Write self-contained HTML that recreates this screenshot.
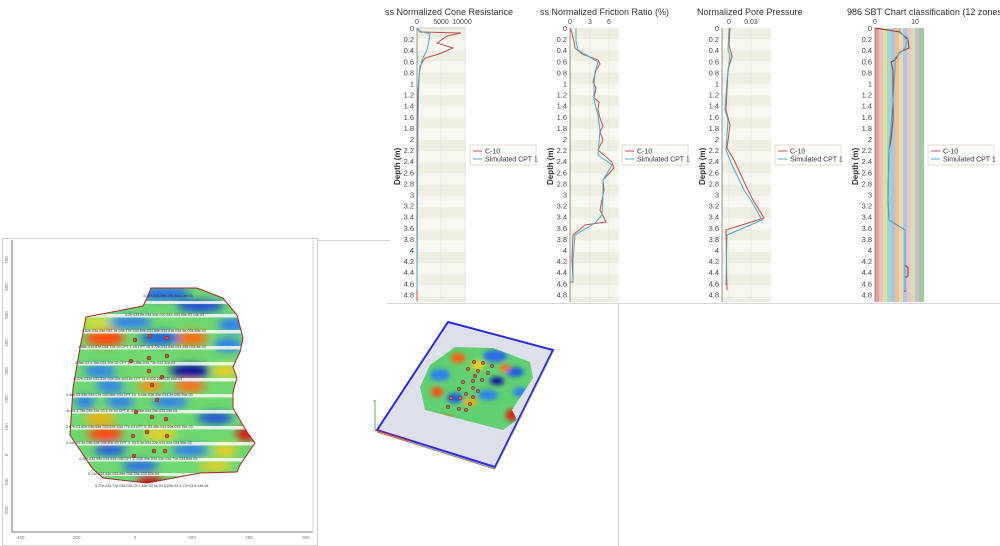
<!DOCTYPE html>
<html><head><meta charset="utf-8"><style>
html,body{margin:0;padding:0;background:#fff;width:1000px;height:546px;overflow:hidden}
svg{display:block;font-family:"Liberation Sans",sans-serif}
</style></head><body>
<svg width="1000" height="546" viewBox="0 0 1000 546" xmlns="http://www.w3.org/2000/svg">
<defs>
<filter id="bl" filterUnits="userSpaceOnUse" x="0" y="250" width="320" height="260"><feGaussianBlur stdDeviation="4"/></filter>
<filter id="bl2" filterUnits="userSpaceOnUse" x="380" y="320" width="200" height="140"><feGaussianBlur stdDeviation="2.5"/></filter>
<clipPath id="mapc"><polygon points="151,288 197,288 223,298 237,315 243,338 240,352 233,367 237,378 233,392 233,408 247,432 255,443 240,465 237,472 200,473 147,483 103,478 92,468 70,435 73,388 80,348 86,317 143,306 147,298"/></clipPath>
<clipPath id="c3d"><polygon points="455,347 493,348 530,362 533,378 512,410 517,420 503,430 425,410 420,387 430,365"/></clipPath>
<pattern id="stripes" x="0" y="28" width="49" height="22.4" patternUnits="userSpaceOnUse"><rect width="49" height="11.2" fill="#efeee2"/><rect y="11.2" width="49" height="11.2" fill="#f8f8f1"/></pattern>
</defs>

<line x1="318" y1="240.5" x2="390" y2="240.5" stroke="#d0d0d0"/>
<line x1="387" y1="303.5" x2="1000" y2="303.5" stroke="#d8d8d8"/>
<line x1="618.5" y1="304" x2="618.5" y2="546" stroke="#d8d8d8"/>

<rect x="2.5" y="238.5" width="315" height="307" fill="#fff" stroke="#d0d0d0"/>
<line x1="12" y1="240" x2="12" y2="532" stroke="#555" stroke-width="0.8"/>
<line x1="12" y1="532" x2="313" y2="532" stroke="#555" stroke-width="0.8"/>
<line x1="313" y1="240" x2="313" y2="532" stroke="#ccc" stroke-width="0.8"/>
<g font-size="4.5" fill="#777" text-anchor="middle">
<text x="20" y="539">-400</text><text x="76" y="539">-200</text><text x="135" y="539">0</text><text x="192" y="539">200</text><text x="249" y="539">400</text><text x="306" y="539">600</text>
<text x="8" y="260" transform="rotate(-90 8 260)">700</text><text x="8" y="287" transform="rotate(-90 8 287)">600</text><text x="8" y="315" transform="rotate(-90 8 315)">500</text><text x="8" y="343" transform="rotate(-90 8 343)">400</text><text x="8" y="371" transform="rotate(-90 8 371)">300</text><text x="8" y="399" transform="rotate(-90 8 399)">200</text><text x="8" y="427" transform="rotate(-90 8 427)">100</text><text x="8" y="455" transform="rotate(-90 8 455)">0</text><text x="8" y="483" transform="rotate(-90 8 483)">-100</text><text x="8" y="511" transform="rotate(-90 8 511)">-200</text>
</g>
<g clip-path="url(#mapc)">
<rect x="60" y="280" width="200" height="210" fill="#6fd870"/>
<g filter="url(#bl)">
<ellipse cx="100" cy="322" rx="22" ry="7" fill="#c8e040"/>
<ellipse cx="105" cy="338" rx="20" ry="8" fill="#ff4a10"/>
<ellipse cx="190" cy="338" rx="18" ry="7" fill="#ff6a10"/>
<ellipse cx="160" cy="338" rx="20" ry="7" fill="#2060e0"/>
<ellipse cx="130" cy="322" rx="22" ry="6" fill="#2f80f0"/>
<ellipse cx="200" cy="306" rx="24" ry="6" fill="#1a4ad8"/>
<ellipse cx="165" cy="294" rx="26" ry="7" fill="#2a70e8"/>
<ellipse cx="232" cy="325" rx="14" ry="7" fill="#2f80f0"/>
<ellipse cx="228" cy="345" rx="14" ry="7" fill="#2f80f0"/>
<ellipse cx="190" cy="371" rx="20" ry="7" fill="#1010a0"/>
<ellipse cx="100" cy="371" rx="16" ry="6" fill="#2f80f0"/>
<ellipse cx="225" cy="371" rx="14" ry="6" fill="#f0d020"/>
<ellipse cx="190" cy="386" rx="16" ry="6" fill="#ff7010"/>
<ellipse cx="110" cy="386" rx="14" ry="6" fill="#2f80f0"/>
<ellipse cx="150" cy="386" rx="12" ry="6" fill="#ff9010"/>
<ellipse cx="170" cy="402" rx="18" ry="6" fill="#2f80f0"/>
<ellipse cx="120" cy="402" rx="14" ry="6" fill="#2f80f0"/>
<ellipse cx="100" cy="418" rx="16" ry="6" fill="#f0b010"/>
<ellipse cx="215" cy="418" rx="18" ry="6" fill="#1a50d8"/>
<ellipse cx="105" cy="434" rx="18" ry="7" fill="#ff4a10"/>
<ellipse cx="160" cy="434" rx="16" ry="6" fill="#f0d020"/>
<ellipse cx="246" cy="434" rx="10" ry="7" fill="#e01010"/>
<ellipse cx="110" cy="450" rx="16" ry="6" fill="#2060e0"/>
<ellipse cx="190" cy="450" rx="18" ry="6" fill="#2f80f0"/>
<ellipse cx="140" cy="466" rx="18" ry="6" fill="#2a70e8"/>
<ellipse cx="150" cy="482" rx="14" ry="6" fill="#d01010"/>
<ellipse cx="85" cy="402" rx="10" ry="7" fill="#2f80f0"/>
<ellipse cx="225" cy="450" rx="12" ry="6" fill="#f0d020"/>
<ellipse cx="215" cy="466" rx="16" ry="5" fill="#f0d020"/>
</g>
<g fill="#fff" opacity="0.8">
<rect x="60" y="301" width="200" height="3"/><rect x="60" y="314" width="200" height="3.5"/><rect x="60" y="330" width="200" height="3.5"/><rect x="60" y="346" width="200" height="3.5"/><rect x="60" y="362" width="200" height="3.5"/><rect x="60" y="378" width="200" height="3.5"/><rect x="60" y="394" width="200" height="3.5"/><rect x="60" y="410" width="200" height="3.5"/><rect x="60" y="426" width="200" height="3.5"/><rect x="60" y="442" width="200" height="3.5"/><rect x="60" y="458" width="200" height="3.5"/><rect x="60" y="473" width="200" height="3"/>
</g>
</g>
<polygon points="151,288 197,288 223,298 237,315 243,338 240,352 233,367 237,378 233,392 233,408 247,432 255,443 240,465 237,472 200,473 147,483 103,478 92,468 70,435 73,388 80,348 86,317 143,306 147,298" fill="none" stroke="#9a2a2a" stroke-width="1"/>
<g font-size="3.6" fill="#333">
<text x="143" y="297">3.12e-034.36e-034.16e2.6e-03</text>
<text x="125" y="316">3.2e-033.2e-034.50e-032.81e-034.90e-03.14e-03</text>
<text x="82" y="332">3.62e-034.24e-032.7e-034.17e-033.84e-034.84e-034.81e-034.4e-034.89e-03</text>
<text x="78" y="348">4.68e-033.87e-034.72e-03 CPT 1-05 CPT 16 3.72e-034.84e-034.45e-034.8e-03</text>
<text x="75" y="364">4.58e-03.4.16e-034.20e-03 CPT 13 3.88e-034.73e-033.32e-03</text>
<text x="74" y="380">5.27e-033e-033.81e-034.42e-034.80 CPT 11 e-032.26e-035.86e-03</text>
<text x="66" y="396">4.46e-03.53e-033.07e-034.66e-034 CPT 10 .5.08e-036.40e-034.2e-035.29e-03</text>
<text x="66" y="412">4e-03.3.75e-035.33e-03.5.7e-03 CPT 8 .033.88e-034.25e-033.15e-03</text>
<text x="66" y="428">3.67e-03.82e-036.64e-033.87e-034.77e-03 CPT 5 .03.48e-033.00e-033.76e-03</text>
<text x="66" y="444">4.34e-03.3e-036.52e-035.40e-03 CPT 3 .03.5.3e-034.22e-033.52e-034.55e-03</text>
<text x="79" y="460">4.30e-032.99e-034.81e-035 CPT 2 .034.30e-034.33e-034.71e-034.84e-03</text>
<text x="88" y="475">5.12e-033.54e-033.85e-034.33e-033.52e-03</text>
<text x="95" y="487">5.72e-034.77e-035.02e-03 7.46e-03  5e-03  6.53e-03 4.17e-03.5.14e-04</text>
</g>
<g fill="#c0503a" stroke="#7a2a1a" stroke-width="0.5">
<circle cx="150" cy="336" r="2"/><circle cx="167" cy="338" r="2"/><circle cx="135" cy="340" r="2"/><circle cx="167" cy="356" r="2"/><circle cx="131" cy="361" r="2"/><circle cx="149" cy="358" r="2"/><circle cx="149" cy="371" r="2"/><circle cx="162" cy="377" r="2"/><circle cx="152" cy="385" r="2"/><circle cx="157" cy="400" r="2"/><circle cx="136" cy="412" r="2"/><circle cx="152" cy="417" r="2"/><circle cx="166" cy="419" r="2"/><circle cx="147" cy="432" r="2"/><circle cx="167" cy="436" r="2"/><circle cx="133" cy="436" r="2"/><circle cx="154" cy="451" r="2"/><circle cx="165" cy="451" r="2"/><circle cx="134" cy="456" r="2"/>
</g>

<!-- 3D VIEW -->
<polygon points="448,322 553,350 495,467 377,430" fill="#dde0ea" stroke="#2a2ae0" stroke-width="2"/>
<line x1="377" y1="432" x2="495" y2="469" stroke="#9a8a7a" stroke-width="1.2"/>
<line x1="553" y1="352" x2="495" y2="469" stroke="#9a8a7a" stroke-width="0.8"/>
<g clip-path="url(#c3d)">
<rect x="415" y="340" width="125" height="95" fill="#60d070"/>
<g filter="url(#bl2)">
<ellipse cx="458" cy="358" rx="7" ry="5" fill="#ff5a10"/><ellipse cx="495" cy="356" rx="12" ry="6" fill="#2a6ae8"/><ellipse cx="515" cy="372" rx="9" ry="5" fill="#1f5fe0"/>
<ellipse cx="440" cy="375" rx="10" ry="6" fill="#2f80f0"/><ellipse cx="497" cy="381" rx="7" ry="4" fill="#1010a0"/><ellipse cx="505" cy="368" rx="5" ry="4" fill="#ff7010"/>
<ellipse cx="437" cy="392" rx="6" ry="5" fill="#ff4a10"/><ellipse cx="455" cy="398" rx="8" ry="5" fill="#1f5fe0"/><ellipse cx="488" cy="395" rx="10" ry="5" fill="#2f80f0"/>
<ellipse cx="478" cy="365" rx="7" ry="5" fill="#f0d020"/><ellipse cx="512" cy="415" rx="6" ry="6" fill="#e02010"/><ellipse cx="470" cy="402" rx="7" ry="4" fill="#f0b010"/>
<ellipse cx="445" cy="420" rx="10" ry="4" fill="#ff5010"/><ellipse cx="520" cy="392" rx="7" ry="5" fill="#2f80f0"/>
</g>
</g>
<g fill="#c06a5a" stroke="#7a2a2a" stroke-width="0.6">
<circle cx="474" cy="362" r="1.6"/><circle cx="483" cy="363" r="1.6"/><circle cx="492" cy="366" r="1.6"/><circle cx="468" cy="369" r="1.6"/><circle cx="478" cy="371" r="1.6"/><circle cx="488" cy="373" r="1.6"/><circle cx="475" cy="376" r="1.6"/><circle cx="482" cy="380" r="1.6"/><circle cx="463" cy="382" r="1.6"/><circle cx="473" cy="381" r="1.6"/><circle cx="459" cy="389" r="1.6"/><circle cx="473" cy="388" r="1.6"/><circle cx="478" cy="391" r="1.6"/><circle cx="466" cy="394" r="1.6"/><circle cx="451" cy="398" r="1.6"/><circle cx="460" cy="398" r="1.6"/><circle cx="473" cy="397" r="1.6"/><circle cx="448" cy="407" r="1.6"/><circle cx="459" cy="409" r="1.6"/><circle cx="466" cy="410" r="1.6"/><circle cx="470" cy="404" r="1.6"/>
</g>
<line x1="375" y1="430" x2="375" y2="400" stroke="#3a9a3a" stroke-width="0.8"/>
<text x="373" y="402" font-size="4" fill="#3a9a3a">z</text>
<line x1="375" y1="430" x2="410" y2="441" stroke="#e02020" stroke-width="1"/>

<!-- TOP CHARTS -->
<g font-size="9" fill="#333">
<text x="385" y="15">ss Normalized Cone Resistance</text>
<text x="540" y="15">ss Normalized Friction Ratio (%)</text>
<text x="697" y="15">Normalized Pore Pressure</text>
<text x="847" y="15">986 SBT Chart classification (12 zones</text>
</g>

<g transform="translate(417,0)">
<rect x="0" y="28" width="49" height="274" fill="url(#stripes)"/>
<line x1="24" y1="28" x2="24" y2="302" stroke="#ddd" stroke-width="0.5"/><line x1="48" y1="28" x2="48" y2="302" stroke="#ddd" stroke-width="0.5"/>
<line x1="0" y1="28" x2="0" y2="302" stroke="#666" stroke-width="0.7"/><line x1="0" y1="28" x2="49" y2="28" stroke="#999" stroke-width="0.5"/>
<g font-size="7" fill="#444" text-anchor="middle"><text x="0" y="24">0</text><text x="24" y="24">5000</text><text x="45" y="24">10000</text></g>
<polyline fill="none" stroke="#c0504d" stroke-width="1" points="0,28 3,32 44,33 30,36 20,43 36,48 22,54 8,58 3,66 1,90 0,130 0,300"/>
<polyline fill="none" stroke="#4bacc6" stroke-width="1" points="0,28 3,31 13,34 12,40 10,50 5,60 2,75 1,120 0,290"/>
</g>
<g transform="translate(570,0)">
<rect x="0" y="28" width="49" height="274" fill="url(#stripes)"/>
<line x1="20" y1="28" x2="20" y2="302" stroke="#ddd" stroke-width="0.5"/><line x1="39" y1="28" x2="39" y2="302" stroke="#ddd" stroke-width="0.5"/>
<line x1="0" y1="28" x2="0" y2="302" stroke="#666" stroke-width="0.7"/>
<g font-size="7" fill="#444" text-anchor="middle"><text x="0" y="24">0</text><text x="20" y="24">3</text><text x="39" y="24">6</text></g>
<polyline fill="none" stroke="#c0504d" stroke-width="1" points="0,28 2,33 4,42 5,48 12,54 28,60 30,64 26,70 23,82 26,88 24,98 29,102 28,110 30,118 33,126 30,132 33,140 28,150 42,162 44,168 33,180 34,190 32,200 30,210 36,222 15,225 3,235 2,260 3,282 0,282"/>
<polyline fill="none" stroke="#4bacc6" stroke-width="1" points="6,28 6,42 8,50 28,62 25,72 24,85 24,100 28,115 30,130 28,155 42,165 33,180 33,195 32,215 25,223 5,235 3,260 3,282"/>
</g>
<g transform="translate(722,0)">
<rect x="0" y="28" width="49" height="274" fill="url(#stripes)"/>
<line x1="7" y1="28" x2="7" y2="302" stroke="#ddd" stroke-width="0.5"/><line x1="29" y1="28" x2="29" y2="302" stroke="#ddd" stroke-width="0.5"/>
<line x1="0" y1="28" x2="0" y2="302" stroke="#666" stroke-width="0.7"/>
<g font-size="7" fill="#444" text-anchor="middle"><text x="7" y="24">0</text><text x="29" y="24">0.03</text></g>
<polyline fill="none" stroke="#c0504d" stroke-width="1" points="8,28 7,45 10,56 6,70 4,110 8,125 5,148 12,160 24,186 31,200 42,218 4,230 5,290"/>
<polyline fill="none" stroke="#4bacc6" stroke-width="1" points="7,28 6,50 8,55 5,80 3,110 6,120 4,150 10,165 22,190 30,202 40,220 5,235 4,285"/>
</g>
<g transform="translate(875,0)">
<rect x="0" y="28" width="49" height="274" fill="#f3f0e4"/>
<g opacity="0.6"><rect x="0" y="28" width="4" height="274" fill="#e06a6a"/><rect x="4" y="28" width="4" height="274" fill="#e8a0a0"/><rect x="8" y="28" width="4" height="274" fill="#c8d870"/><rect x="12" y="28" width="4" height="274" fill="#70c8c8"/><rect x="16" y="28" width="4" height="274" fill="#7aa8e0"/><rect x="20" y="28" width="4" height="274" fill="#f0a050"/><rect x="24" y="28" width="4" height="274" fill="#f0c890"/><rect x="28" y="28" width="4" height="274" fill="#7ab0e8"/><rect x="32" y="28" width="4" height="274" fill="#f0a8a8"/><rect x="36" y="28" width="4" height="274" fill="#c0d890"/><rect x="40" y="28" width="4" height="274" fill="#b09ad0"/><rect x="44" y="28" width="5" height="274" fill="#70b070"/></g>
<line x1="0" y1="28" x2="0" y2="302" stroke="#666" stroke-width="0.7"/>
<g font-size="7" fill="#444" text-anchor="middle"><text x="0" y="24">0</text><text x="40" y="24">10</text></g>
<polyline fill="none" stroke="#a03030" stroke-width="1" points="0,28 25,32 33,40 34,48 25,52 20,60 16,62 18,70 18,120 16,140 14,150 13,200 14,220 30,230 30,265 33,268 33,276 30,278 30,292"/>
<polyline fill="none" stroke="#4bacc6" stroke-width="1" points="25,28 25,33 33,38 30,48 20,58 20,70 18,100 14,150 13,200 14,220 30,230 30,290"/>
</g>

<g font-size="7.5" fill="#444" text-anchor="end">
<text x="414" y="31"><tspan x="414" y="31">0</tspan><tspan x="414" y="42.1">0.2</tspan><tspan x="414" y="53.2">0.4</tspan><tspan x="414" y="64.3">0.6</tspan><tspan x="414" y="75.4">0.8</tspan><tspan x="414" y="86.5">1</tspan><tspan x="414" y="97.6">1.2</tspan><tspan x="414" y="108.7">1.4</tspan><tspan x="414" y="119.8">1.6</tspan><tspan x="414" y="130.9">1.8</tspan><tspan x="414" y="142">2</tspan><tspan x="414" y="153.1">2.2</tspan><tspan x="414" y="164.2">2.4</tspan><tspan x="414" y="175.3">2.6</tspan><tspan x="414" y="186.4">2.8</tspan><tspan x="414" y="197.5">3</tspan><tspan x="414" y="208.6">3.2</tspan><tspan x="414" y="219.7">3.4</tspan><tspan x="414" y="230.8">3.6</tspan><tspan x="414" y="241.9">3.8</tspan><tspan x="414" y="253">4</tspan><tspan x="414" y="264.1">4.2</tspan><tspan x="414" y="275.2">4.4</tspan><tspan x="414" y="286.3">4.6</tspan><tspan x="414" y="297.4">4.8</tspan></text>
<text x="567" y="31"><tspan x="567" y="31">0</tspan><tspan x="567" y="42.1">0.2</tspan><tspan x="567" y="53.2">0.4</tspan><tspan x="567" y="64.3">0.6</tspan><tspan x="567" y="75.4">0.8</tspan><tspan x="567" y="86.5">1</tspan><tspan x="567" y="97.6">1.2</tspan><tspan x="567" y="108.7">1.4</tspan><tspan x="567" y="119.8">1.6</tspan><tspan x="567" y="130.9">1.8</tspan><tspan x="567" y="142">2</tspan><tspan x="567" y="153.1">2.2</tspan><tspan x="567" y="164.2">2.4</tspan><tspan x="567" y="175.3">2.6</tspan><tspan x="567" y="186.4">2.8</tspan><tspan x="567" y="197.5">3</tspan><tspan x="567" y="208.6">3.2</tspan><tspan x="567" y="219.7">3.4</tspan><tspan x="567" y="230.8">3.6</tspan><tspan x="567" y="241.9">3.8</tspan><tspan x="567" y="253">4</tspan><tspan x="567" y="264.1">4.2</tspan><tspan x="567" y="275.2">4.4</tspan><tspan x="567" y="286.3">4.6</tspan><tspan x="567" y="297.4">4.8</tspan></text>
<text x="719" y="31"><tspan x="719" y="31">0</tspan><tspan x="719" y="42.1">0.2</tspan><tspan x="719" y="53.2">0.4</tspan><tspan x="719" y="64.3">0.6</tspan><tspan x="719" y="75.4">0.8</tspan><tspan x="719" y="86.5">1</tspan><tspan x="719" y="97.6">1.2</tspan><tspan x="719" y="108.7">1.4</tspan><tspan x="719" y="119.8">1.6</tspan><tspan x="719" y="130.9">1.8</tspan><tspan x="719" y="142">2</tspan><tspan x="719" y="153.1">2.2</tspan><tspan x="719" y="164.2">2.4</tspan><tspan x="719" y="175.3">2.6</tspan><tspan x="719" y="186.4">2.8</tspan><tspan x="719" y="197.5">3</tspan><tspan x="719" y="208.6">3.2</tspan><tspan x="719" y="219.7">3.4</tspan><tspan x="719" y="230.8">3.6</tspan><tspan x="719" y="241.9">3.8</tspan><tspan x="719" y="253">4</tspan><tspan x="719" y="264.1">4.2</tspan><tspan x="719" y="275.2">4.4</tspan><tspan x="719" y="286.3">4.6</tspan><tspan x="719" y="297.4">4.8</tspan></text>
<text x="872" y="31"><tspan x="872" y="31">0</tspan><tspan x="872" y="42.1">0.2</tspan><tspan x="872" y="53.2">0.4</tspan><tspan x="872" y="64.3">0.6</tspan><tspan x="872" y="75.4">0.8</tspan><tspan x="872" y="86.5">1</tspan><tspan x="872" y="97.6">1.2</tspan><tspan x="872" y="108.7">1.4</tspan><tspan x="872" y="119.8">1.6</tspan><tspan x="872" y="130.9">1.8</tspan><tspan x="872" y="142">2</tspan><tspan x="872" y="153.1">2.2</tspan><tspan x="872" y="164.2">2.4</tspan><tspan x="872" y="175.3">2.6</tspan><tspan x="872" y="186.4">2.8</tspan><tspan x="872" y="197.5">3</tspan><tspan x="872" y="208.6">3.2</tspan><tspan x="872" y="219.7">3.4</tspan><tspan x="872" y="230.8">3.6</tspan><tspan x="872" y="241.9">3.8</tspan><tspan x="872" y="253">4</tspan><tspan x="872" y="264.1">4.2</tspan><tspan x="872" y="275.2">4.4</tspan><tspan x="872" y="286.3">4.6</tspan><tspan x="872" y="297.4">4.8</tspan></text>
</g>
<g font-size="8" fill="#333" font-weight="bold">
<text transform="translate(400,185) rotate(-90)">Depth (m)</text>
<text transform="translate(553,185) rotate(-90)">Depth (m)</text>
<text transform="translate(705,185) rotate(-90)">Depth (m)</text>
<text transform="translate(858,185) rotate(-90)">Depth (m)</text>
</g>
<g font-size="7" fill="#333">
<g transform="translate(470,145)"><rect x="0" y="0" width="66" height="20" fill="#fff" stroke="#e0dcc8"/><line x1="3" y1="6" x2="12" y2="6" stroke="#c0504d"/><text x="15" y="8.5">C-10</text><line x1="3" y1="14" x2="12" y2="14" stroke="#4bacc6"/><text x="15" y="16.5">Simulated CPT 1</text></g>
<g transform="translate(622,145)"><rect x="0" y="0" width="66" height="20" fill="#fff" stroke="#e0dcc8"/><line x1="3" y1="6" x2="12" y2="6" stroke="#c0504d"/><text x="15" y="8.5">C-10</text><line x1="3" y1="14" x2="12" y2="14" stroke="#4bacc6"/><text x="15" y="16.5">Simulated CPT 1</text></g>
<g transform="translate(775,145)"><rect x="0" y="0" width="66" height="20" fill="#fff" stroke="#e0dcc8"/><line x1="3" y1="6" x2="12" y2="6" stroke="#c0504d"/><text x="15" y="8.5">C-10</text><line x1="3" y1="14" x2="12" y2="14" stroke="#4bacc6"/><text x="15" y="16.5">Simulated CPT 1</text></g>
<g transform="translate(928,145)"><rect x="0" y="0" width="66" height="20" fill="#fff" stroke="#e0dcc8"/><line x1="3" y1="6" x2="12" y2="6" stroke="#c0504d"/><text x="15" y="8.5">C-10</text><line x1="3" y1="14" x2="12" y2="14" stroke="#4bacc6"/><text x="15" y="16.5">Simulated CPT 1</text></g>
</g>
</svg>
</body></html>
